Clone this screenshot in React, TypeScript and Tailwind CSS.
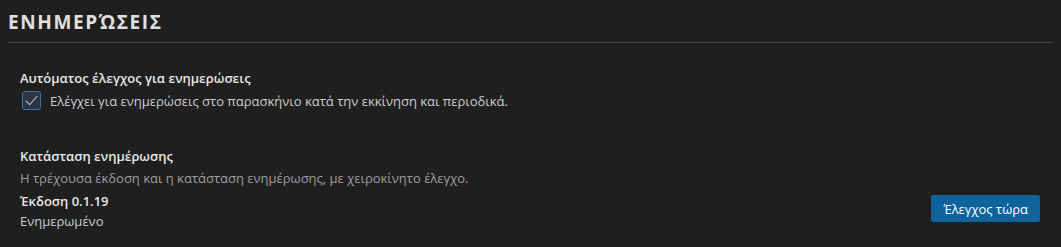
import React from "react";

export default function App() {
  return (
    <div className="w-[1061px] h-[247px] bg-[#1f1f1f] text-[#cccccc] overflow-hidden" style={{ fontFamily: '"Open Sans", "Noto Sans", sans-serif' }}>
      <div className="px-2 pt-[9px]">
        <h1 className="text-[19px] font-bold tracking-[1.6px] text-[#e0e0e0] leading-[26px] pb-[7px] border-b border-[#444444]">
          ΕΝΗΜΕΡΏΣΕΙΣ
        </h1>
      </div>
      <div className="px-[20px] pt-[26px]">
        <div className="text-[13px] font-semibold text-[#e7e7e7] leading-[18px]">Αυτόματος έλεγχος για ενημερώσεις</div>
        <label className="flex items-center gap-[9px] mt-[4px]">
          <span className="w-[19px] h-[19px] rounded-[3px] border border-[#3a6ea5] bg-[#2b3440] flex items-center justify-center ml-[2px]">
            <svg width="15" height="15" viewBox="0 0 16 16" fill="none" stroke="#c8c8c8" strokeWidth="1.1" strokeLinecap="round" strokeLinejoin="round">
              <path d="M2 8.5 L6 12.5 L14 3.5" />
            </svg>
          </span>
          <span className="text-[13px] leading-[18px] text-[#cccccc]">Ελέγχει για ενημερώσεις στο παρασκήνιο κατά την εκκίνηση και περιοδικά.</span>
        </label>
        <div className="mt-[37px] text-[13px] font-semibold text-[#e7e7e7] leading-[18px]">Κατάσταση ενημέρωσης</div>
        <div className="mt-[4px] text-[13px] leading-[18px] text-[#9d9d9d]">Η τρέχουσα έκδοση και η κατάσταση ενημέρωσης, με χειροκίνητο έλεγχο.</div>
        <div className="flex items-center justify-between mt-[5px]">
          <div>
            <div className="text-[13px] font-semibold text-[#e7e7e7] leading-[18px]">Έκδοση 0.1.19</div>
            <div className="mt-[2px] text-[13px] leading-[18px] text-[#cccccc]">Ενημερωμένο</div>
          </div>
          <button className="mr-[1px] mb-[5px] h-[27px] px-[12px] rounded-[2px] bg-[#0e639c] text-white text-[13px] leading-[18px]">Έλεγχος τώρα</button>
        </div>
      </div>
    </div>
  );
}
